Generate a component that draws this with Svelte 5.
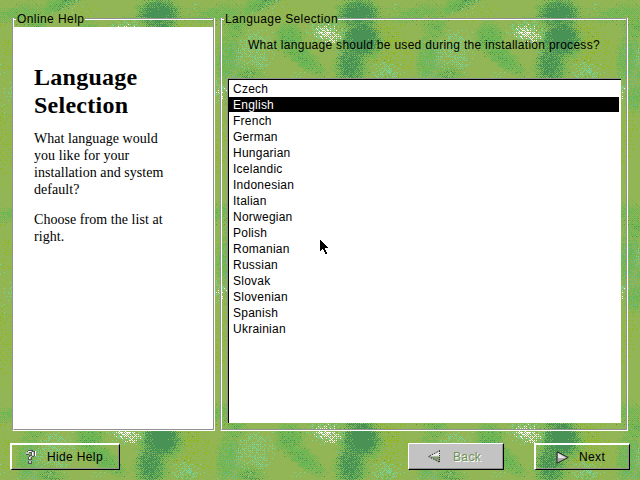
<script>
  const SIZE = 200;
  const palette = {
    leaf: '#6db655',
    forest: '#499255',
    moss: '#92b600',
    olive: '#6d9224',
    steel: '#6db6aa',
    mint: '#6ddbaa',
    white: '#ffffff'
  };
  const weight = { leaf: 0.78, forest: 0.78, moss: 0.78, olive: 0.85, steel: 0.85, mint: 0.78, white: 0.9 };

  // colour, centre x, centre y, radius x, radius y, angle, density
  const blobs = [
    ['moss', 186, 44, 26, 54, 0, 0.36],
    ['moss', 75, 10, 26, 20, 0, 0.22],
    ['moss', 8, 60, 18, 46, 0, 0.24],
    ['moss', 6, 145, 28, 60, 0, 0.32],
    ['moss', 28, 125, 10, 50, 0, 0.26],
    ['moss', 90, 130, 60, 35, 0, 0.24],
    ['moss', 130, 70, 14, 16, 0, 0.12],
    ['leaf', 16, 13, 32, 10, -12, 0.85],
    ['leaf', 58, 4, 34, 10, -25, 1.0],
    ['leaf', 36, 27, 15, 20, 10, 0.85],
    ['leaf', 28, 58, 17, 36, 8, 0.9],
    ['leaf', 48, 74, 24, 14, 10, 0.8],
    ['leaf', 89, 37, 19, 20, 0, 1.15],
    ['leaf', 103, 58, 32, 13, 38, 1.1],
    ['leaf', 158, 14, 31, 22, 0, 1.15],
    ['leaf', 160, 42, 31, 26, 0, 1.15],
    ['leaf', 151, 68, 23, 26, 0, 1.1],
    ['leaf', 128, 26, 26, 13, 0, 0.5],
    ['leaf', 35, 98, 14, 20, 0, 0.9],
    ['leaf', 28, 17, 16, 24, 0, 0.6],
    ['leaf', 194, 13, 14, 12, 0, 0.5],
    ['leaf', 186, 77, 18, 10, 0, 0.45],
    ['olive', 90, 44, 24, 24, 0, 0.13],
    ['olive', 35, 12, 44, 20, -12, 0.13],
    ['olive', 162, 38, 36, 48, 0, 0.17],
    ['forest', 158, 13, 24, 17, 0, 1.2],
    ['forest', 161, 38, 22, 22, 0, 1.3],
    ['forest', 150, 64, 17, 28, 8, 0.95],
    ['forest', 67, 2, 24, 7, -25, 0.5],
    ['forest', 36, 31, 7, 10, 10, 0.35],
    ['forest', 50, 76, 15, 9, 12, 0.5],
    ['forest', 90, 41, 16, 20, 0, 0.25],
    ['forest', 106, 61, 26, 10, 35, 0.27],
    ['steel', 32, 60, 14, 28, 10, 0.3],
    ['steel', 140, 48, 7, 18, 0, 0.24],
    ['steel', 70, 2, 28, 9, -20, 0.17],
    ['steel', 32, 88, 16, 28, 0, 0.24],
    ['mint', 54, 50, 26, 28, 0, 0.44],
    ['mint', 126, 32, 25, 16, 0, 0.5],
    ['mint', 186, 71, 20, 13, 0, 0.48],
    ['mint', 95, 73, 16, 9, 0, 0.24],
    ['mint', 68, 6, 30, 12, -20, 0.16],
    ['mint', 16, 90, 14, 18, 0, 0.42],
    ['mint', 193, 5, 12, 8, 0, 0.16],
    ['mint', 0, 102, 20, 18, 0, 0.13],
    ['white', 128, 34, 17, 11, 15, 0.5],
    ['white', 22, 92, 8, 12, 0, 0.17]
  ];

  const bayer = [0, 8, 2, 10, 12, 4, 14, 6, 3, 11, 1, 9, 15, 7, 13, 5];

  function noise(x, y, k) {
    let h = Math.imul(x + 17, 374761393) ^ Math.imul(y + 31, 668265263) ^ Math.imul(k + 7, 1274126177);
    h = Math.imul(h ^ (h >>> 13), 1103515245);
    return ((h ^ (h >>> 16)) >>> 0) / 4294967296;
  }

  function wrap(d) {
    return d > 100 ? d - SIZE : d < -100 ? d + SIZE : d;
  }

  function paintTile() {
    const cells = new Array(SIZE * SIZE).fill(null);
    blobs.forEach(([name, cx, cy, rx, ry, angle, density], k) => {
      const c = Math.cos((angle * Math.PI) / 180);
      const s = Math.sin((angle * Math.PI) / 180);
      for (let y = 0; y < SIZE; y++) {
        for (let x = 0; x < SIZE; x++) {
          const dx = wrap(x - cx);
          const dy = wrap(y - cy);
          const u = (dx * c + dy * s) / rx;
          const v = (dy * c - dx * s) / ry;
          const f = 1 - u * u - v * v;
          if (f <= 0) continue;
          const b = (bayer[(y % 4) * 4 + (x % 4)] + 0.5) / 16;
          const t = b * 0.55 + noise(x, y, k) * 0.45;
          if (f * density * weight[name] > t) cells[y * SIZE + x] = name;
        }
      }
    });
    const paths = {};
    for (let y = 0; y < SIZE; y++) {
      for (let x = 0; x < SIZE; ) {
        const name = cells[y * SIZE + x];
        let w = 1;
        while (x + w < SIZE && cells[y * SIZE + x + w] === name) w++;
        if (name) paths[name] = (paths[name] || '') + `M${x} ${y}h${w}v1h-${w}z`;
        x += w;
      }
    }
    return Object.entries(paths);
  }

  const tile = paintTile();
  const languages = [
    'Czech', 'English', 'French', 'German', 'Hungarian', 'Icelandic', 'Indonesian', 'Italian',
    'Norwegian', 'Polish', 'Romanian', 'Russian', 'Slovak', 'Slovenian', 'Spanish', 'Ukrainian'
  ];
  let selected = $state('English');
</script>

<div class="screen">
  <svg class="backdrop" width="640" height="480" shape-rendering="crispEdges" aria-hidden="true">
    <defs>
      <pattern id="marble" width="200" height="200" patternUnits="userSpaceOnUse">
        <rect width="200" height="200" fill="#92b655" />
        {#each tile as [name, d]}
          <path {d} fill={palette[name]} />
        {/each}
      </pattern>
    </defs>
    <rect width="640" height="480" fill="url(#marble)" />
  </svg>

  <main>
    <section class="frame help">
      <header><i class="stub"></i><span style:width="69px">Online Help</span><i class="rule"></i></header>
      <div class="edge"><div class="inner">
        <article>
          <h1>Language<br />Selection</h1>
          <p>What language would<br />you like for your<br />installation and system<br />default?</p>
          <p>Choose from the list at<br />right.</p>
        </article>
      </div></div>
    </section>

    <section class="frame choose">
      <header><i class="stub"></i><span style:width="114px">Language Selection</span><i class="rule"></i></header>
      <div class="edge"><div class="inner">
        <div class="question">What language should be used during the installation process?</div>
        <ul>
          {#each languages as language}
            <li><button class:selected={language === selected} onclick={() => (selected = language)}>{language}</button></li>
          {/each}
        </ul>
      </div></div>
    </section>
  </main>

  <footer>
    <button class="action hide">
      <svg width="12" height="15" viewBox="0 0 12 15" shape-rendering="crispEdges">
        <path d="M3 0h5v1h2v5h-1v1h-2v3h-4v-3h1v-2h2v-2h-2v2h-3v-3h1v-1h1zM3 11h4v3h-4z" fill="#555" />
        <path d="M3 1h4v1h-4zM1 2h3v2h-3zM7 2h2v4h-2zM5 6h2v1h-2zM4 7h2v2h-2zM4 11h2v2h-2z" fill="#c3c3c3" />
        <path d="M3 1h3v1h-3zM7 2h1v3h-1zM10 1h1v5h-1zM4 7h1v2h-1z" fill="#fff" />
      </svg>
      <span>Hide Help</span>
    </button>
    <button class="action back" disabled>
      <svg width="13" height="13" viewBox="0 0 13 13">
        <path d="M12 1V6.5H1z" fill="#e8e8e8" />
        <path d="M1 6.5H12V12z" fill="#7f9872" />
        <path d="M12 .5L.5 6.5L12 12.5" fill="none" stroke="#222" stroke-dasharray="1.4 1.2" />
        <path d="M11.5 1v11" stroke="#333" stroke-dasharray="1 1" />
      </svg>
      <span>Back</span>
    </button>
    <button class="action next">
      <svg width="13" height="13" viewBox="0 0 13 13">
        <path d="M1 1V12L12 6.5z" fill="#aaa" />
        <path d="M2 2V7H10z" fill="#e4e4e4" />
        <path d="M1 .8V12.2L12.2 6.5z" fill="none" stroke="#222" />
      </svg>
      <span>Next</span>
    </button>
  </footer>

  <svg class="pointer" width="10" height="15" viewBox="0 0 10 15" shape-rendering="crispEdges">
    <path d="M0 0h1v1h1v1h1v1h1v1h1v1h1v1h1v1h1v1h-3v2h1v2h1v2h-2v-2h-1v-2h-1v-1h-1v1h-1v1h-1z" />
  </svg>
</div>

<style>
  :global(body) { margin: 0; overflow: hidden; }
  .screen {
    position: relative;
    width: 640px;
    height: 480px;
    overflow: hidden;
    display: flex;
    flex-direction: column;
    font: 12px/16px "Liberation Sans", Arial, sans-serif;
    letter-spacing: 0.38px;
    color: #000;
    background: #92b655;
  }
  .backdrop { position: absolute; inset: 0; }
  main {
    position: relative;
    display: flex;
    gap: 5px;
    padding: 11px 12px 0;
    height: 420px;
  }
  .frame { display: flex; flex-direction: column; }
  .help { width: 203px; }
  .choose { width: 408px; }
  header {
    display: flex;
    height: 16px;
    white-space: nowrap;
  }
  header i {
    height: 1px;
    margin-top: 7px;
    border-top: 1px solid #929292;
    background: #fff;
  }
  .stub { width: 4px; }
  .rule { flex: 1; }
  header span { text-indent: 1px; }
  .help header span { letter-spacing: 0.42px; }
  .edge {
    flex: 1;
    display: flex;
    margin-top: -9px;
    border: solid;
    border-width: 0 1px 1px;
    border-color: #fff #fff #fff #929292;
  }
  .inner {
    flex: 1;
    display: flex;
    flex-direction: column;
    border: solid;
    border-width: 0 1px 1px;
    border-color: #929292 #929292 #929292 #fff;
  }
  article {
    flex: 1;
    margin-top: 9px;
    padding: 36px 20px 0;
    background: #fff;
    font: 14px/17px "Liberation Serif", "Times New Roman", serif;
    letter-spacing: 0.05px;
    white-space: nowrap;
  }
  h1 {
    margin: 0 0 11px;
    font-size: 24px;
    line-height: 28px;
    letter-spacing: 0.26px;
  }
  p { margin: 0 0 13px; }
  .question {
    padding: 19px 0 0 26px;
    height: 42px;
    letter-spacing: 0.29px;
    white-space: nowrap;
  }
  ul {
    margin: 0 5px 5px 6px;
    height: 342px;
    padding: 1px 2px 0 0;
    list-style: none;
    background: #fff;
    border-top: 1px solid #000;
    border-left: 1px solid #000;
    box-shadow: -1px -1px #929292;
  }
  li { height: 16px; }
  li button {
    display: block;
    width: 100%;
    height: 15px;
    padding: 0 0 0 4px;
    border: 0;
    background: none;
    color: inherit;
    font: inherit;
    line-height: 16px;
    letter-spacing: 0.24px;
    text-align: left;
  }
  li button.selected { background: #000; color: #fff; }
  footer {
    position: relative;
    display: flex;
    padding: 12px 10px 0;
  }
  .action {
    box-sizing: border-box;
    display: flex;
    align-items: center;
    height: 27px;
    padding: 0;
    border: solid;
    border-width: 2px 1px 1px 2px;
    border-color: #fff #000 #000 #fff;
    box-shadow: inset -1px -1px #929292;
    background: none;
    color: #000;
    font: inherit;
    letter-spacing: 0.36px;
  }
  .hide { width: 110px; padding-left: 13px; gap: 10px; }
  .back {
    width: 96px;
    margin-left: 288px;
    padding-left: 19px;
    gap: 12px;
    border-width: 1px;
    background: #c3c3c3;
    color: #6d9255;
    text-shadow: 1px 1px #fff;
  }
  .next { width: 96px; margin-left: 30px; padding-left: 20px; gap: 10px; }
  .pointer { position: absolute; left: 320px; top: 240px; }
</style>
